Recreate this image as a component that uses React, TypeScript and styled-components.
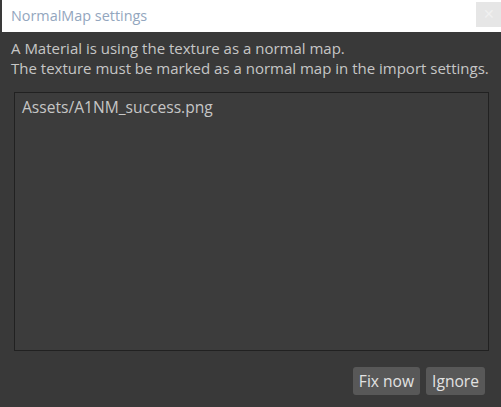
import styled, { createGlobalStyle } from "styled-components";

const GlobalStyle = createGlobalStyle`
  html, body {
    margin: 0;
    padding: 0;
    background: #393939;
  }
  #root {
    height: 100vh;
  }
`;

const Window = styled.div`
  display: flex;
  flex-direction: column;
  width: 501px;
  height: 407px;
  overflow: hidden;
  font-family: "Open Sans", "Noto Sans", sans-serif;
  background: #393939;
`;

const TitleBar = styled.div`
  display: flex;
  align-items: center;
  justify-content: space-between;
  height: 32px;
  background: #ffffff;
  border-left: 2px solid #3a3a3a;
  box-sizing: border-box;
`;

const Title = styled.span`
  padding-left: 9px;
  padding-bottom: 2px;
  font-size: 14.4px;
  color: #93a6be;
`;

const CloseButton = styled.button`
  width: 25px;
  height: 25px;
  margin-bottom: 3px;
  padding: 0;
  border: none;
  background: #e6e6e6;
  color: #f0f0f0;
  font-size: 14px;
  line-height: 25px;
`;

const Body = styled.div`
  flex: 1;
  display: flex;
  flex-direction: column;
  padding: 6px 12px 12px 11px;
  box-sizing: border-box;
`;

const Message = styled.p`
  margin: 0;
  font-size: 15px;
  line-height: 20px;
  color: #c6c6c6;
  white-space: nowrap;
`;

const Frame = styled.div`
  flex: 1;
  margin: 14px 0 16px 3px;
  padding: 3px 7px;
  border: 1px solid #212121;
  background: #3c3c3c;
  font-size: 15.6px;
  color: #c6c6c6;
`;

const Actions = styled.div`
  display: flex;
  justify-content: flex-end;
  gap: 6px;
  padding-right: 4px;
`;

const Button = styled.button<{ $pad: number }>`
  height: 28px;
  padding: 0 ${(p) => p.$pad}px;
  border: none;
  border-radius: 3px;
  background: #585858;
  color: #e2e2e2;
  font-family: inherit;
  font-size: 15.6px;
  line-height: 28px;
`;

export default function App() {
  return (
    <>
      <GlobalStyle />
      <Window>
        <TitleBar>
          <Title>NormalMap settings</Title>
          <CloseButton aria-label="Close">✕</CloseButton>
        </TitleBar>
        <Body>
          <Message>
            A Material is using the texture as a normal map.
            <br />
            The texture must be marked as a normal map in the import settings.
          </Message>
          <Frame>Assets/A1NM_success.png</Frame>
          <Actions>
            <Button $pad={6}>Fix now</Button>
            <Button $pad={6}>Ignore</Button>
          </Actions>
        </Body>
      </Window>
    </>
  );
}
